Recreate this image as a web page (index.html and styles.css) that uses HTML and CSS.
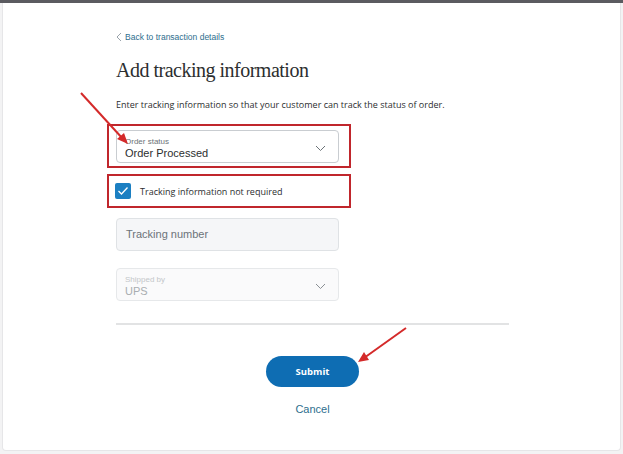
FILE: index.html
```html
<!DOCTYPE html>
<html lang="en">
<head>
  <meta charset="UTF-8">
  <title>Add tracking information</title>
  <link rel="stylesheet" href="styles.css">
</head>
<body>

<div class="topbar"></div>

<div class="card">
  <div class="content">
    <a class="back" href="#">
      <svg width="6" height="10" viewBox="0 0 6 10"><path d="M5 1 L1 5 L5 9" fill="none" stroke="#9aa3ab" stroke-width="1"/></svg>
      Back to transaction details
    </a>

    <h1>Add tracking information</h1>

    <p class="intro">Enter tracking information so that your customer can track the status of order.</p>

    <div class="highlight select-box">
      <div class="field select">
        <div>
          <div class="label">Order status</div>
          <div class="value">Order Processed</div>
        </div>
        <svg class="chev" width="11" height="7" viewBox="0 0 11 7"><path d="M1 1 L5.5 5.5 L10 1" fill="none" stroke="#6c7378" stroke-width="1"/></svg>
      </div>
    </div>

    <div class="highlight check-box">
      <span class="checkbox">
        <svg width="12" height="10" viewBox="0 0 12 10"><path d="M1.5 5 L4.5 8 L10.5 1.5" fill="none" stroke="#fff" stroke-width="1.3"/></svg>
      </span>
      <span class="check-text">Tracking information not required</span>
    </div>

    <div class="field input">Tracking number</div>

    <div class="field select disabled">
      <div>
        <div class="label">Shipped by</div>
        <div class="value">UPS</div>
      </div>
      <svg class="chev" width="11" height="7" viewBox="0 0 11 7"><path d="M1 1 L5.5 5.5 L10 1" fill="none" stroke="#8a8f94" stroke-width="1"/></svg>
    </div>

    <hr>

    <div class="actions">
      <button class="submit">Submit</button>
      <a class="cancel" href="#">Cancel</a>
    </div>
  </div>

  <!-- annotation arrows -->
  <svg class="arrows" width="623" height="454" viewBox="0 0 623 454">
    <line x1="80" y1="93" x2="122" y2="139" stroke="#d42a2a" stroke-width="2"/>
    <path d="M127 144 L116 139 L123 133 Z" fill="#d42a2a"/>
    <line x1="405" y1="328" x2="363" y2="358" stroke="#d42a2a" stroke-width="2"/>
    <path d="M357 362 L363 352 L368 360 Z" fill="#d42a2a"/>
  </svg>
</div>

</body>
</html>
```

FILE: styles.css
```css
body {
  margin: 0;
  background: #f3f3f4;
  font-family: "Liberation Sans", Arial, sans-serif;
}
.topbar { height: 3px; background: #5b5b60; }

.card {
  position: relative;
  margin: 0 2px;
  height: 448px;
  background: #fff;
  border: 1px solid #e6e6e8;
  border-top: none;
  border-radius: 0 0 4px 4px;
  box-sizing: border-box;
}
.content {
  width: 393px;
  padding: 28px 0 0 113px;
}

.back {
  display: flex;
  align-items: center;
  gap: 3px;
  font-size: 8.5px;
  color: #2d6e8e;
  text-decoration: none;
  height: 12px;
}

h1 {
  font-family: "Liberation Serif", "Times New Roman", serif;
  font-weight: normal;
  font-size: 20px;
  letter-spacing: -0.5px;
  color: #2c2e2f;
  margin: 14px 0 0;
  line-height: 26px;
}

.intro {
  font-family: "Open Sans", sans-serif;
  font-size: 9px;
  color: #2c2e2f;
  margin: 15px 0 0;
  line-height: 14px;
}

.highlight {
  border: 2px solid #c0262c;
  width: 244px;
  margin-left: -9px;
  box-sizing: border-box;
}
.select-box { margin-top: 12px; height: 44px; padding: 4px 0 0 7px; }
.check-box {
  margin-top: 6px;
  height: 34px;
  display: flex;
  align-items: center;
  padding-left: 6px;
  gap: 9px;
}

.field {
  width: 223px;
  height: 33px;
  box-sizing: border-box;
  border: 1px solid #c9cdd1;
  border-radius: 4px;
  background: #fff;
}
.select {
  display: flex;
  align-items: center;
  justify-content: space-between;
  padding: 3px 12px 0 8px;
}
.label { font-size: 8px; color: #6c7378; line-height: 10px; }
.value { font-size: 11px; color: #2c2e2f; line-height: 13px; }

.checkbox {
  width: 16px;
  height: 16px;
  background: #1b7fc2;
  border-radius: 2px;
  display: flex;
  align-items: center;
  justify-content: center;
}
.check-text {
  font-family: "Open Sans", sans-serif;
  font-size: 9px;
  color: #2c2e2f;
}

.input {
  margin-top: 10px;
  background: #f5f6f8;
  border-color: #dfe2e5;
  font-size: 11px;
  color: #6c7378;
  padding: 9px 0 0 9px;
}

.disabled {
  margin-top: 17px;
  background: #fafafb;
  border-color: #e6e8ea;
}
.disabled .label { color: #c3c6c9; }
.disabled .value { color: #a9adb1; }

hr {
  border: none;
  border-top: 2px solid #e2e3e4;
  margin: 22px 0 0;
  width: 393px;
}

.actions {
  display: flex;
  flex-direction: column;
  align-items: center;
  padding-top: 31px;
}
.submit {
  width: 93px;
  height: 31px;
  border: none;
  border-radius: 16px;
  background: #0e6db3;
  color: #fff;
  font-family: "Open Sans", sans-serif;
  font-weight: bold;
  font-size: 9.5px;
}
.cancel {
  margin-top: 16px;
  font-size: 11px;
  color: #2d6e8e;
  text-decoration: none;
}

.arrows { position: absolute; left: -2px; top: -3px; pointer-events: none; }
```
